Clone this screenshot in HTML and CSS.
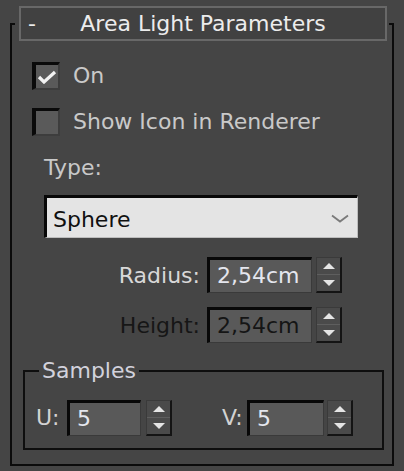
FILE: index.html
```html
<!DOCTYPE html>
<html>
<head>
<meta charset="utf-8">
<link rel="stylesheet" href="styles.css">
</head>
<body>
<fieldset class="rollout">
  <legend class="rollout-legend">
    <div class="rollout-head">
      <span class="minus">-</span>
      <span class="title">Area Light Parameters</span>
    </div>
  </legend>
  <div class="content">
    <div class="check first">
      <span class="box">
        <svg class="tick" width="20" height="14" viewBox="0 0 20 14"><path d="M2 7 L7 12 L18 2" fill="none" stroke="#f2f2f2" stroke-width="3.2"/></svg>
      </span>
      <span class="check-label">On</span>
    </div>
    <div class="check second">
      <span class="box"></span>
      <span class="check-label">Show Icon in Renderer</span>
    </div>
    <div class="type-label">Type:</div>
    <div class="select">
      <span class="select-value">Sphere</span>
      <svg class="chev" width="18" height="9" viewBox="0 0 18 9"><path d="M1 1.5 L9 7.5 L17 1.5" fill="none" stroke="#7a7a7a" stroke-width="1.8"/></svg>
    </div>
    <div class="spin-row">
      <span class="spin-label">Radius:</span>
      <div class="field">2,54cm</div>
      <div class="spinner">
        <span class="half"><svg width="12" height="6" viewBox="0 0 12 6"><path d="M0 6 L6 0 L12 6 Z" fill="#e4e4e4"/></svg></span>
        <span class="half lower"><svg width="12" height="6" viewBox="0 0 12 6"><path d="M0 0 L6 6 L12 0 Z" fill="#e4e4e4"/></svg></span>
      </div>
    </div>
    <div class="spin-row disabled second-row">
      <span class="spin-label">Height:</span>
      <div class="field">2,54cm</div>
      <div class="spinner">
        <span class="half"><svg width="12" height="6" viewBox="0 0 12 6"><path d="M0 6 L6 0 L12 6 Z" fill="#e4e4e4"/></svg></span>
        <span class="half lower"><svg width="12" height="6" viewBox="0 0 12 6"><path d="M0 0 L6 6 L12 0 Z" fill="#e4e4e4"/></svg></span>
      </div>
    </div>
    <fieldset class="group">
      <legend class="group-legend">Samples</legend>
      <div class="uv-row">
        <span class="uv-label u">U:</span>
        <div class="field uv-field u-field">5</div>
        <div class="spinner">
          <span class="half"><svg width="12" height="6" viewBox="0 0 12 6"><path d="M0 6 L6 0 L12 6 Z" fill="#e4e4e4"/></svg></span>
          <span class="half lower"><svg width="12" height="6" viewBox="0 0 12 6"><path d="M0 0 L6 6 L12 0 Z" fill="#e4e4e4"/></svg></span>
        </div>
        <span class="uv-label v">V:</span>
        <div class="field uv-field v-field">5</div>
        <div class="spinner v-spin">
          <span class="half"><svg width="12" height="6" viewBox="0 0 12 6"><path d="M0 6 L6 0 L12 6 Z" fill="#e4e4e4"/></svg></span>
          <span class="half lower"><svg width="12" height="6" viewBox="0 0 12 6"><path d="M0 0 L6 6 L12 0 Z" fill="#e4e4e4"/></svg></span>
        </div>
      </div>
    </fieldset>
  </div>
</fieldset>
</body>
</html>
```
FILE: styles.css
```css
* { box-sizing: border-box; }
html, body { margin: 0; padding: 0; }
body {
  background: #454545;
  width: 404px;
  height: 471px;
  overflow: hidden;
  font-family: "DejaVu Sans", sans-serif;
  font-size: 22px;
  color: #cfcfcf;
}
.rollout {
  margin: 6px 0 0 10px;
  width: 384px;
  padding: 0;
  border: 2px solid #0b0b0b;
  min-width: 0;
}
.rollout-legend {
  margin-left: 3px;
  padding: 0 2px 0 4px;
}
.rollout-head {
  width: 368px;
  height: 35px;
  border: 2px solid #686868;
  background: #414141;
  display: grid;
  grid-template-columns: 1fr auto 1fr;
  align-items: center;
  line-height: 30px;
  color: #ececec;
}
.minus { padding-left: 7px; }
.title { grid-column: 2; }
.content { padding-top: 21px; }
.check {
  display: flex;
  align-items: center;
  gap: 13px;
  margin-left: 20px;
  height: 28px;
  line-height: 28px;
}
.check.second { margin-top: 18px; }
.box {
  width: 28px;
  height: 28px;
  background: #5a5a5a;
  border-top: 3px solid #0a0a0a;
  border-left: 4px solid #0a0a0a;
  border-right: 2px solid #3d3d3d;
  border-bottom: 2px solid #3d3d3d;
  display: flex;
  align-items: center;
  justify-content: center;
}
.check-label { color: #c9c9c9; }
.type-label {
  margin: 18px 0 0 32px;
  line-height: 28px;
  height: 28px;
  color: #c9c9c9;
}
.select {
  margin: 13px 0 0 32px;
  width: 314px;
  height: 43px;
  background: #e4e4e4;
  border-top: 3px solid #080808;
  border-left: 3px solid #080808;
  border-right: 1px solid #bdbdbd;
  border-bottom: 1px solid #bdbdbd;
  display: flex;
  align-items: center;
  justify-content: space-between;
  padding: 3px 8px 0 6px;
  color: #101010;
}
.chev { margin-top: -1px; }
.spin-row {
  display: flex;
  align-items: center;
  margin-top: 19px;
  height: 36px;
}
.spin-row.second-row { margin-top: 14px; }
.spin-label {
  width: 188px;
  text-align: right;
  margin-right: 7px;
  color: #d8d8d8;
}
.field {
  width: 105px;
  height: 36px;
  background: #595959;
  border-top: 3px solid #080808;
  border-left: 3px solid #080808;
  border-right: 1px solid #3a3a3a;
  border-bottom: 1px solid #3a3a3a;
  padding-left: 7px;
  line-height: 32px;
  color: #e4e6ee;
  margin-right: 4px;
}
.spinner {
  width: 26px;
  height: 36px;
  display: flex;
  flex-direction: column;
  background: #4a4a4a;
  border-top: 1px solid #3a3a3a;
  border-left: 1px solid #3a3a3a;
  border-right: 2px solid #141414;
  border-bottom: 2px solid #141414;
}
.half {
  flex: 1;
  display: flex;
  align-items: center;
  justify-content: center;
}
.half.lower { border-top: 1px solid #5e5e5e; }
.disabled .spin-label { color: #161616; }
.disabled .field { color: #151515; }
.group {
  margin: 16px 0 14px 11px;
  width: 361px;
  padding: 0;
  border: 2px solid #0e0e0e;
  min-width: 0;
}
.group-legend {
  margin-left: 14px;
  padding: 0 3px;
  line-height: 24px;
  color: #d2d2dc;
}
.uv-row {
  display: flex;
  align-items: center;
  margin-top: 17px;
  padding: 0 0 12px 11px;
}
.uv-label { color: #d2d2d2; line-height: 36px; }
.uv-label.u { width: 31px; }
.uv-label.v { width: 25px; margin-left: 50px; }
.uv-field { width: 74px; margin-right: 5px; }
.uv-field.v-field { width: 77px; margin-right: 3px; }
```
